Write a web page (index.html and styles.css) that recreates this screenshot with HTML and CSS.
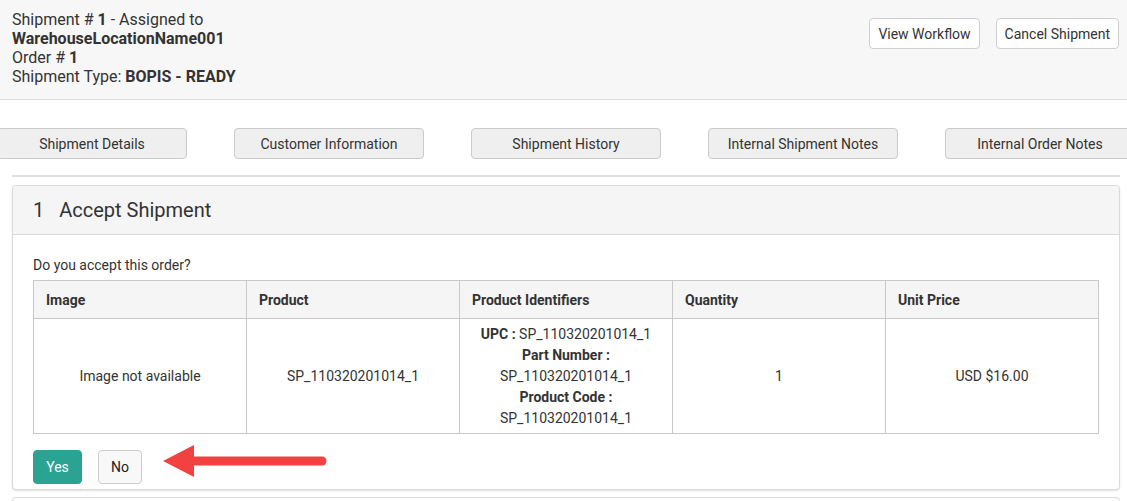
FILE: index.html
```html
<!DOCTYPE html>
<html>
<head>
<meta charset="utf-8">
<link rel="stylesheet" href="styles.css">
</head>
<body>
<div class="page">
  <header class="top">
    <div class="info">
      <div>Shipment # <b>1</b> - Assigned to</div>
      <div><b>WarehouseLocationName001</b></div>
      <div>Order # <b>1</b></div>
      <div>Shipment Type: <b>BOPIS - READY</b></div>
    </div>
    <div class="actions">
      <button class="btn-default">View Workflow</button>
      <button class="btn-default">Cancel Shipment</button>
    </div>
  </header>

  <div class="tabs-wrap">
    <nav class="tabs">
      <button class="tab">Shipment Details</button>
      <button class="tab">Customer Information</button>
      <button class="tab">Shipment History</button>
      <button class="tab">Internal Shipment Notes</button>
      <button class="tab">Internal Order Notes</button>
    </nav>
  </div>

  <div class="divider"></div>

  <section class="panel">
    <div class="panel-head"><span class="step">1</span>Accept Shipment</div>
    <div class="panel-body">
      <p class="question">Do you accept this order?</p>
      <table class="items">
        <thead>
          <tr><th>Image</th><th>Product</th><th>Product Identifiers</th><th>Quantity</th><th>Unit Price</th></tr>
        </thead>
        <tbody>
          <tr>
            <td>Image not available</td>
            <td>SP_110320201014_1</td>
            <td class="ids">
              <div><b>UPC :</b> SP_110320201014_1</div>
              <div><b>Part Number :</b></div>
              <div>SP_110320201014_1</div>
              <div><b>Product Code :</b></div>
              <div>SP_110320201014_1</div>
            </td>
            <td>1</td>
            <td>USD $16.00</td>
          </tr>
        </tbody>
      </table>
      <div class="answer">
        <button class="btn-yes">Yes</button>
        <button class="btn-no">No</button>
        <svg class="arrow" width="170" height="34" viewBox="0 0 170 34">
          <polygon points="0,16 31,0 31,32" fill="#f24141"/>
          <line x1="28" y1="16" x2="159" y2="16" stroke="#f24141" stroke-width="9" stroke-linecap="round"/>
        </svg>
      </div>
    </div>
  </section>
  <section class="panel next"></section>
</div>
</body>
</html>
```

FILE: styles.css
```css
* { box-sizing: border-box; }
html, body { margin: 0; padding: 0; }
body {
  font-family: Roboto, "Liberation Sans", Arial, sans-serif;
  color: #333;
  background: #fff;
  overflow: hidden;
  width: 1127px;
  height: 501px;
}
b { font-weight: 700; }
button { font-family: inherit; cursor: pointer; }

.top {
  display: flex;
  justify-content: space-between;
  align-items: flex-start;
  background: #f7f7f7;
  border-bottom: 1px solid #dcdcdc;
  height: 100px;
  padding: 10px 8px 0 12px;
}
.info { font-size: 16px; line-height: 19px; }
.actions { display: flex; gap: 16px; margin-top: 8px; }
.btn-default {
  height: 31px;
  padding: 0 8px;
  font-size: 14px;
  color: #333;
  background: #fff;
  border: 1px solid #cfcfcf;
  border-radius: 4px;
}

.tabs-wrap { overflow: hidden; margin-top: 28px; }
.tabs {
  display: flex;
  gap: 47px;
  margin-left: -3px;
}
.tab {
  flex: 0 0 190px;
  height: 31px;
  font-size: 14px;
  color: #333;
  background: #efefef;
  border: 1px solid #cacaca;
  border-radius: 4px;
}

.divider {
  height: 2px;
  background: #dedede;
  margin: 16px 7px 0 12px;
}

.panel {
  margin: 8px 7px 0 12px;
  border: 1px solid #dadada;
  border-radius: 4px;
  box-shadow: 0 1px 2px rgba(0,0,0,0.12);
  background: #fff;
}
.panel-head {
  height: 49px;
  background: #f5f5f5;
  border-bottom: 1px solid #dadada;
  border-radius: 4px 4px 0 0;
  padding: 0 20px;
  display: flex;
  align-items: center;
  font-size: 20px;
}
.step { margin-right: 15px; }
.panel-body { padding: 21px 20px 5px 20px; }
.question { margin: 0 0 6px; font-size: 14px; line-height: 18px; }

.items {
  width: 100%;
  border-collapse: collapse;
  table-layout: fixed;
  font-size: 14px;
}
.items th, .items td { border: 1px solid #c9c9c9; }
.items th {
  background: #f5f5f5;
  text-align: left;
  font-weight: 700;
  height: 38px;
  padding: 0 12px;
}
.items td {
  text-align: center;
  vertical-align: middle;
  padding: 4px 8px;
  line-height: 21px;
  height: 115px;
}

.answer {
  position: relative;
  display: flex;
  gap: 16px;
  margin-top: 16px;
}
.btn-yes, .btn-no {
  height: 34px;
  font-size: 14px;
  border-radius: 4px;
}
.btn-yes {
  width: 49px;
  background: #2ba392;
  color: #fff;
  border: 1px solid #2ba392;
}
.btn-no {
  width: 44px;
  background: #f8f8f8;
  color: #222;
  border: 1px solid #cccccc;
}
.arrow { position: absolute; left: 130px; top: -5px; }

.panel.next { height: 20px; margin-top: 7px; }
```
